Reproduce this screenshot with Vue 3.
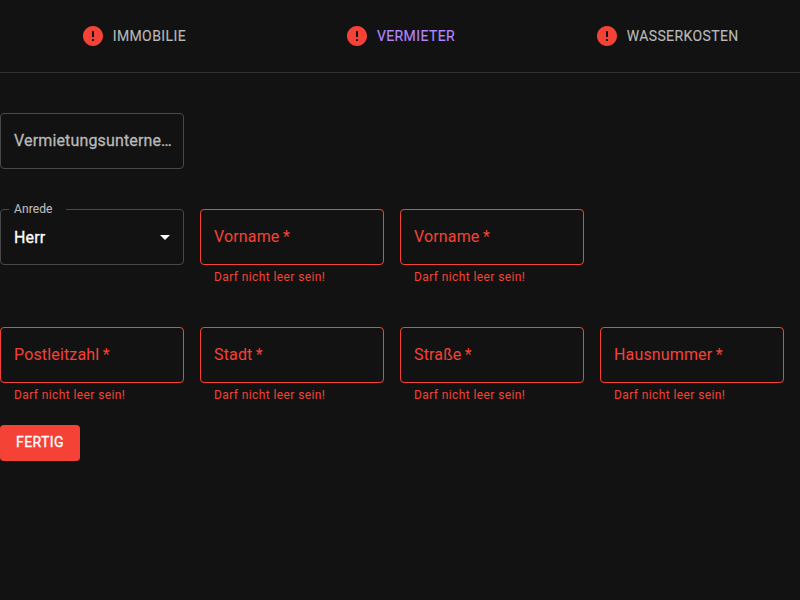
<script setup>
const tabs = [
  { label: 'Immobilie' },
  { label: 'Vermieter', active: true },
  { label: 'Wasserkosten' },
]
const names = ['Vorname', 'Vorname']
const address = ['Postleitzahl', 'Stadt', 'Straße', 'Hausnummer']
</script>

<template>
  <main class="page">
    <nav class="tabs">
      <button v-for="t in tabs" :key="t.label" class="tab" :class="{ active: t.active }">
        <svg class="tab-icon" viewBox="0 0 24 24"><path d="M12 2C6.48 2 2 6.48 2 12s4.48 10 10 10 10-4.48 10-10S17.52 2 12 2zm1 15h-2v-2h2v2zm0-4h-2V7h2v6z" /></svg>
        <span class="tab-text">{{ t.label }}</span>
      </button>
    </nav>
    <form class="form">
      <div class="row first">
        <div class="field"><div class="box"><span class="label strong">Vermietungsunterne…</span></div></div>
      </div>
      <div class="row names">
        <div class="field">
          <div class="box select">
            <span class="legend">Anrede</span>
            <span class="value">Herr</span>
            <svg class="arrow" viewBox="0 0 24 24"><path d="M7 10l5 5 5-5z" /></svg>
          </div>
        </div>
        <div v-for="(n, i) in names" :key="i" class="field error">
          <div class="box"><span class="label">{{ n }}&thinsp;*</span></div>
          <p class="helper">Darf nicht leer sein!</p>
        </div>
      </div>
      <div class="row">
        <div v-for="n in address" :key="n" class="field error">
          <div class="box"><span class="label">{{ n }}&thinsp;*</span></div>
          <p class="helper">Darf nicht leer sein!</p>
        </div>
      </div>
      <button type="button" class="submit">Fertig</button>
    </form>
  </main>
</template>

<style>
body { margin: 0; background: #121212; }
</style>

<style scoped>
.page { box-sizing: border-box; min-height: 600px; background: #121212; color: #fff; font-family: Roboto, sans-serif; }
.tabs { box-sizing: border-box; display: flex; height: 73px; border-bottom: 1px solid #303030; }
.tab { display: flex; flex: 1; align-items: center; justify-content: center; gap: 8px; padding: 0; border: 0; background: none; color: #b8b8b8; font: 400 14px/24px Roboto, sans-serif; letter-spacing: 0.02857em; text-transform: uppercase; }
.tab.active { color: #b388ff; }
.tab-text, .legend { -webkit-text-stroke: 0.15px currentColor; }
.strong, .value { -webkit-text-stroke: 0.3px currentColor; }
.tab-icon { width: 24px; height: 24px; fill: #f44336; }
.form { padding-top: 40px; }
.row { display: flex; gap: 16px; }
.first { margin-bottom: 40px; }
.names { margin-bottom: 40px; }
.field { width: 184px; }
.box { box-sizing: border-box; position: relative; display: flex; align-items: center; height: 56px; padding: 0 11px 0 13px; border: 1px solid #484848; border-radius: 4px; }
.label { padding-bottom: 2px; color: #b8b8b8; font-size: 16px; line-height: 23px; letter-spacing: 0.00938em; white-space: nowrap; }
.value { flex: 1; font-size: 16px; letter-spacing: 0.00938em; }
.legend { position: absolute; top: -9px; left: 8px; width: 57px; padding-left: 5px; box-sizing: border-box; background: #121212; color: #b8b8b8; font-size: 12px; line-height: 17px; letter-spacing: 0.00938em; }
.arrow { width: 24px; height: 24px; margin-right: -5px; fill: #fff; }
.error .box { border-color: #f44336; }
.error .label, .helper { color: #f44336; }
.helper { margin: 3px 14px 0; font-size: 12px; line-height: 19px; letter-spacing: 0.03333em; }
.submit { display: block; width: 80px; margin-top: 20px; height: 36px; padding: 0 0 2px; border: 0; border-radius: 4px; background: #f44336; color: #fff; font: 400 14px/24px Roboto, sans-serif; letter-spacing: 0.03em; text-transform: uppercase; -webkit-text-stroke: 0.3px currentColor; }
</style>
